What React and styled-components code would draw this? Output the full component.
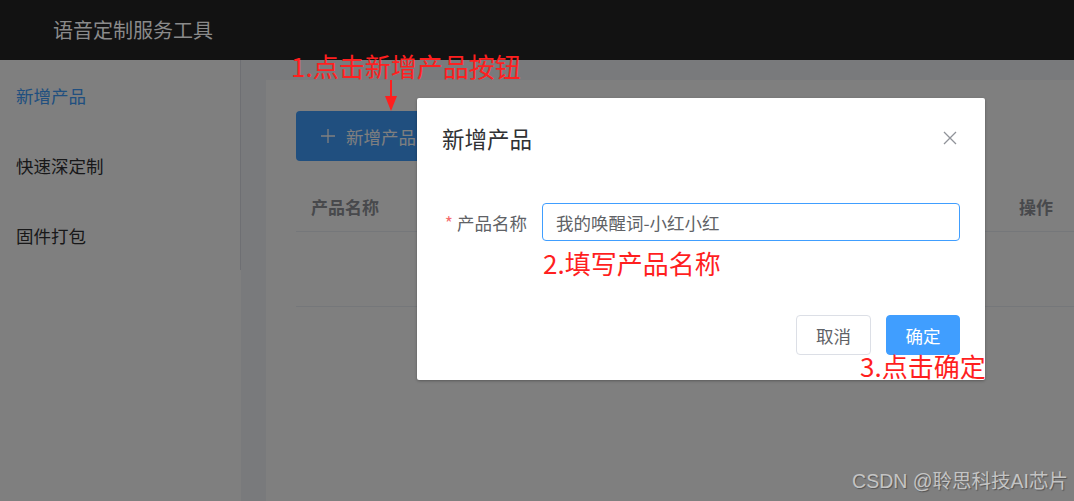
import React from 'react';
import styled, { createGlobalStyle } from 'styled-components';

const GlobalStyle = createGlobalStyle`
  html, body {
    margin: 0;
    padding: 0;
    height: 100%;
    overflow: hidden;
  }
  body {
    font-family: "Noto Sans CJK SC", "Noto Sans", sans-serif;
    background: #fff;
  }
  #root { height: 100%; }
`;

const Page = styled.div`
  position: relative;
  width: 1074px;
  height: 501px;
  display: flex;
  flex-direction: column;
  overflow: hidden;
`;

const Header = styled.header`
  position: relative;
  z-index: 20;
  height: 60px;
  flex-shrink: 0;
  background: #121212;
  display: flex;
  align-items: center;
  padding-left: 53px;
  padding-bottom: 1px;
  box-sizing: border-box;
  color: #8a8a8a;
  font-size: 20px;
`;

const Body = styled.div`
  flex: 1;
  display: flex;
  min-height: 0;
`;

const Aside = styled.aside`
  width: 241px;
  flex-shrink: 0;
  background: #fff;
`;

const Menu = styled.ul`
  list-style: none;
  margin: 0;
  padding: 0;
  width: 240px;
  border-right: 1px solid #dcdfe6;
`;

const MenuItem = styled.li`
  height: 70px;
  display: flex;
  align-items: center;
  padding-left: 16px;
  font-size: 17.5px;
  color: ${p => (p.active ? '#409eff' : '#303133')};
`;

const Main = styled.main`
  flex: 1;
  background: #f2f4f8;
  padding: 20px 0 0 25px;
  display: flex;
  min-width: 0;
`;

const Card = styled.section`
  flex: 1;
  background: #fff;
  padding: 31px 0 0 30px;
`;

const AddButton = styled.button`
  height: 50px;
  padding: 0 24px;
  border: none;
  border-radius: 4px;
  background: #409eff;
  color: #fff;
  font-family: inherit;
  font-size: 17.5px;
  display: flex;
  align-items: center;
  gap: 10px;
`;

const Table = styled.div`
  margin-top: 20px;
`;

const Row = styled.div`
  display: flex;
  align-items: center;
  height: ${p => p.h}px;
  border-bottom: 1px solid #ebeef5;
`;

const HeadCell = styled.div`
  padding-left: 15px;
  font-size: 17px;
  font-weight: 700;
  color: #909399;
  ${p => (p.grow ? 'flex: 1;' : `width: ${p.w}px;`)}
`;

const Mask = styled.div`
  position: absolute;
  inset: 0;
  z-index: 10;
  background: rgba(0, 0, 0, 0.5);
`;

const Dialog = styled.div`
  position: absolute;
  z-index: 30;
  left: 417px;
  top: 98px;
  width: 568px;
  height: 282px;
  background: #fff;
  border-radius: 2px;
  box-shadow: 0 1px 3px rgba(0, 0, 0, 0.3);
  display: flex;
  flex-direction: column;
`;

const DialogHeader = styled.div`
  display: flex;
  align-items: center;
  justify-content: space-between;
  padding: 29px 28px 0 25px;
`;

const DialogTitle = styled.span`
  font-size: 22.5px;
  line-height: 22px;
  color: #303133;
`;

const CloseBtn = styled.button`
  border: none;
  background: none;
  padding: 0;
  width: 14px;
  height: 14px;
  display: flex;
  color: #909399;
`;

const DialogBody = styled.div`
  position: relative;
  padding: 54px 25px 0 25px;
`;

const FormItem = styled.div`
  display: flex;
  align-items: center;
`;

const Label = styled.label`
  width: 100px;
  padding-right: 15px;
  box-sizing: border-box;
  text-align: right;
  font-size: 17.5px;
  color: #606266;
  white-space: nowrap;
  &::before {
    content: '*';
    color: #f56c6c;
    margin-right: 4px;
  }
`;

const Input = styled.input`
  flex: 1;
  height: 38px;
  box-sizing: border-box;
  border: 1px solid #409eff;
  border-radius: 4px;
  padding: 0 13px;
  font-family: inherit;
  font-size: 17.5px;
  color: #606266;
  outline: none;
`;

const DialogFooter = styled.div`
  margin-top: auto;
  display: flex;
  justify-content: flex-end;
  gap: 15px;
  padding: 0 25px 25px;
`;

const FooterButton = styled.button`
  height: 40px;
  width: ${p => p.w}px;
  box-sizing: border-box;
  border-radius: 4px;
  font-family: inherit;
  font-size: 17.5px;
  border: 1px solid ${p => (p.primary ? '#409eff' : '#dcdfe6')};
  background: ${p => (p.primary ? '#409eff' : '#fff')};
  color: ${p => (p.primary ? '#fff' : '#606266')};
`;

const Note = styled.div`
  position: absolute;
  z-index: 40;
  left: ${p => p.x}px;
  top: ${p => p.y}px;
  font-size: 26px;
  line-height: 30px;
  color: #ff1f1f;
  white-space: nowrap;
`;

const Arrow = styled.svg`
  position: absolute;
  z-index: 40;
  left: 384px;
  top: 80px;
`;

const Watermark = styled.div`
  position: absolute;
  z-index: 40;
  right: 6px;
  bottom: 7px;
  font-family: "Liberation Sans", "Noto Sans CJK SC", sans-serif;
  font-size: 19.5px;
  color: #c4c4c4;
  text-shadow: 1px 1px 1px rgba(0, 0, 0, 0.35);
`;

export default function App() {
  return (
    <Page>
      <GlobalStyle />
      <Header>语音定制服务工具</Header>
      <Body>
        <Aside>
          <Menu>
            <MenuItem active>新增产品</MenuItem>
            <MenuItem>快速深定制</MenuItem>
            <MenuItem>固件打包</MenuItem>
          </Menu>
        </Aside>
        <Main>
          <Card>
            <AddButton>
              <svg width="16" height="16" viewBox="0 0 16 16" fill="none" stroke="currentColor" strokeWidth="1.3">
                <path d="M8 1v14M1 8h14" />
              </svg>
              新增产品
            </AddButton>
            <Table>
              <Row h={50}>
                <HeadCell grow>产品名称</HeadCell>
                <HeadCell w={55}>操作</HeadCell>
              </Row>
              <Row h={74} />
            </Table>
          </Card>
        </Main>
      </Body>

      <Mask />

      <Dialog>
        <DialogHeader>
          <DialogTitle>新增产品</DialogTitle>
          <CloseBtn aria-label="close">
            <svg width="14" height="14" viewBox="0 0 14 14" fill="none" stroke="currentColor" strokeWidth="1.3">
              <path d="M1 1l12 12M13 1L1 13" />
            </svg>
          </CloseBtn>
        </DialogHeader>
        <DialogBody>
          <FormItem>
            <Label>产品名称</Label>
            <Input defaultValue="我的唤醒词-小红小红" />
          </FormItem>
        </DialogBody>
        <DialogFooter>
          <FooterButton w={75}>取消</FooterButton>
          <FooterButton w={74} primary>确定</FooterButton>
        </DialogFooter>
      </Dialog>

      <Note x={291} y={51}>1.点击新增产品按钮</Note>
      <Arrow width="14" height="32" viewBox="0 0 14 32">
        <path d="M7 0v18" stroke="#ff1f1f" strokeWidth="2" />
        <path d="M1 16l6 15 6-15z" fill="#ff1f1f" />
      </Arrow>
      <Note x={543} y={248}>2.填写产品名称</Note>
      <Note x={860} y={351}>3.点击确定</Note>

      <Watermark>CSDN @聆思科技AI芯片</Watermark>
    </Page>
  );
}
